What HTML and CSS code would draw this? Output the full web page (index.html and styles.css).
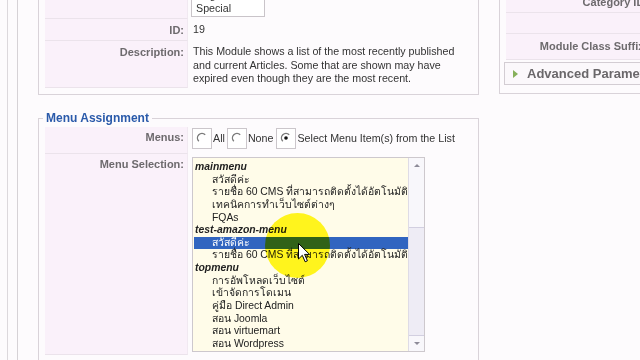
FILE: index.html
```html
<!DOCTYPE html>
<html lang="th">
<head>
    <meta charset="UTF-8">
    <title>Module: Latest News</title>
    <link rel="stylesheet" href="styles.css">
</head>
<body>

<div class="frame">
    <div class="frame-inner">
        <div class="columns">

            <div class="col-left">
                <fieldset class="box details">
                    <div class="row row-access">
                        <div class="key"></div>
                        <div class="val">
                            <div class="access">
                                <div>Public</div>
                                <div>Registered</div>
                                <div>Special</div>
                            </div>
                        </div>
                    </div>
                    <div class="row row-id">
                        <div class="key">ID:</div>
                        <div class="val">19</div>
                    </div>
                    <div class="row row-desc">
                        <div class="key">Description:</div>
                        <div class="val">This Module shows a list of the most recently published and current Articles. Some that are shown may have expired even though they are the most recent.</div>
                    </div>
                </fieldset>

                <fieldset class="box menus">
                    <legend>Menu Assignment</legend>
                    <div class="row row-menus">
                        <div class="key">Menus:</div>
                        <div class="val radios">
                            <label class="radio">
                                <span class="rbox"><svg width="18" height="19" viewBox="0 0 18 19"><path d="M12.2 5.8 A4.5 4.5 0 0 0 5.8 12.2" fill="none" stroke="#7a7a7a" stroke-width="1.4"/></svg></span>All
                            </label>
                            <label class="radio">
                                <span class="rbox"><svg width="18" height="19" viewBox="0 0 18 19"><path d="M12.2 5.8 A4.5 4.5 0 0 0 5.8 12.2" fill="none" stroke="#7a7a7a" stroke-width="1.4"/></svg></span>None
                            </label>
                            <label class="radio">
                                <span class="rbox"><svg width="18" height="19" viewBox="0 0 18 19"><path d="M12.2 5.8 A4.5 4.5 0 0 0 5.8 12.2" fill="none" stroke="#7a7a7a" stroke-width="1.4"/><circle cx="9" cy="9" r="1.8" fill="#111"/></svg></span>Select Menu Item(s) from the List
                            </label>
                        </div>
                    </div>
                    <div class="row row-select">
                        <div class="key">Menu Selection:</div>
                        <div class="val">
                            <div class="menulist">
                                <div class="options">
                                    <div class="group">mainmenu</div>
                                    <div class="opt">สวัสดีค่ะ</div>
                                    <div class="opt">รายชื่อ 60 CMS ที่สามารถติดตั้งได้อัตโนมัติ</div>
                                    <div class="opt">เทคนิคการทำเว็บไซต์ต่างๆ</div>
                                    <div class="opt">FQAs</div>
                                    <div class="group">test-amazon-menu</div>
                                    <div class="opt selected">สวัสดีค่ะ</div>
                                    <div class="opt">รายชื่อ 60 CMS ที่สามารถติดตั้งได้อัตโนมัติ</div>
                                    <div class="group">topmenu</div>
                                    <div class="opt">การอัพโหลดเว็บไซต์</div>
                                    <div class="opt">เข้าจัดการโดเมน</div>
                                    <div class="opt">คู่มือ Direct Admin</div>
                                    <div class="opt">สอน Joomla</div>
                                    <div class="opt">สอน virtuemart</div>
                                    <div class="opt">สอน Wordpress</div>
                                </div>
                                <div class="scroll">
                                    <div class="sb-btn"><span class="arrow-up"></span></div>
                                    <div class="sb-track"><div class="sb-thumb"></div></div>
                                    <div class="sb-btn"><span class="arrow-down"></span></div>
                                </div>
                            </div>
                        </div>
                    </div>
                </fieldset>
            </div>

            <div class="col-right">
                <fieldset class="box params">
                    <div class="prow p-cat"><div class="pkey">Category ID:</div></div>
                    <div class="prow p-spacer"><div class="pkey"></div></div>
                    <div class="prow p-sfx"><div class="pkey">Module Class Suffix:</div></div>
                    <div class="panel"><span class="tri"></span>Advanced Parameters</div>
                </fieldset>
            </div>

        </div>
    </div>
</div>

<!-- cursor highlight from the screen recording -->
<div class="spot"></div>
<svg class="pointer" width="13" height="20" viewBox="0 0 13 20"><path d="M0.5 0.5 L0.5 16 L4.3 12.3 L7.2 18.8 L9.4 17.8 L6.6 11.4 L11.6 11.4 Z" fill="#fff" stroke="#000" stroke-width="1"/></svg>

</body>
</html>
```

FILE: styles.css
```css
body {
    margin: 0;
    height: 360px;
    overflow: hidden;
    background-color: #fdfbfd;
    font-family: "Liberation Sans", Arial, "Noto Sans", sans-serif;
    font-size: 10.7px;
    color: #333;
    position: relative;
}
.frame {
    margin-left: 7px;
    padding-left: 9px;
    border-left: 1px solid #dcd8dc;
    height: 360px;
}
.frame-inner {
    display: flow-root;
    padding-left: 20px;
    border-left: 1px solid #d6d2d6;
    height: 360px;
}
.columns {
    display: flex;
    gap: 20px;
    margin-top: -20px;
}
.col-left {
    width: 441px;
    flex: none;
}
.col-right {
    width: 200px;
    flex: none;
}
fieldset.box {
    margin: 0;
    padding: 0 6px 6px;
    border: 1px solid #d9d3d9;
    min-width: 0;
}
legend {
    margin-left: -2px;
    padding: 0 3px;
    font-size: 12px;
    line-height: 14px;
    font-weight: bold;
    color: #2a5aaa;
}
.row {
    display: flex;
}
.key {
    width: 139px;
    flex: none;
    padding-right: 3px;
    border-bottom: 1px solid #ebe3eb;
    border-right: 1px solid #f1e9f1;
    background-color: #faf1fa;
    text-align: right;
    font-size: 11px;
    line-height: 14px;
    font-weight: bold;
    color: #6d6a6d;
}
.val {
    padding-left: 5px;
    line-height: 13.5px;
}
.row-access { height: 38px; }
.row-access .val {
    padding-left: 3px;
    display: flex;
    align-items: flex-end;
}
.access {
    width: 66px;
    height: 33px;
    margin-bottom: 2px;
    padding: 0 2px 1px 4px;
    border: 1px solid #c9c4c9;
    border-top: none;
    background-color: #fff;
    display: flex;
    flex-direction: column;
    justify-content: flex-end;
    overflow: hidden;
    line-height: 13px;
}
.row-id { height: 22px; }
.row-id .key, .row-id .val { padding-top: 4px; }
.row-desc { height: 47px; }
.row-desc .key, .row-desc .val { padding-top: 4px; }

fieldset.menus {
    margin-top: 16px;
    padding-top: 2px;
    padding-bottom: 20px;
}
.row-menus { height: 27px; }
.row-menus .key { padding-top: 3px; }
.radios {
    padding-left: 4px;
    display: flex;
    align-items: flex-start;
}
.radio {
    display: flex;
    align-items: center;
    margin-right: 2px;
    padding-top: 1px;
}
.rbox {
    width: 18px;
    height: 19px;
    margin-right: 1px;
    border: 1px solid #cbc6cb;
    background-color: #fff;
    display: block;
}
.rbox svg {
    display: block;
}
.radio:nth-child(2) { margin-right: 3px; }
.row-select { height: 201px; }
.row-select .key { padding-top: 3px; }
.row-select .val { padding-left: 4px; }
.menulist {
    margin-top: 3px;
    width: 231px;
    height: 193px;
    border: 1px solid #cdc8cd;
    background-color: #fffce9;
    display: flex;
}
.options {
    flex: 1;
    padding-top: 3px;
    line-height: 12.64px;
    font-size: 10.4px;
    color: #222;
    white-space: nowrap;
    overflow: hidden;
}
.group {
    padding-left: 2px;
    font-weight: bold;
    font-style: italic;
}
.opt {
    padding-left: 19px;
}
.opt.selected {
    background-color: #3165c0;
    color: #fff;
    margin-left: 1px;
    padding-left: 18px;
}
.scroll {
    width: 15px;
    border-left: 1px solid #dedbe6;
    display: flex;
    flex-direction: column;
    background-color: #f8f7fb;
}
.sb-btn {
    height: 15px;
    display: flex;
    align-items: center;
    justify-content: center;
}
.arrow-up, .arrow-down {
    width: 0;
    height: 0;
    border-left: 3px solid transparent;
    border-right: 3px solid transparent;
}
.arrow-up { border-bottom: 3px solid #8d8b98; }
.arrow-down { border-top: 3px solid #8d8b98; }
.sb-track {
    flex: 1;
    padding-top: 54px;
    display: flex;
    flex-direction: column;
}
.sb-thumb {
    flex: 1;
    border-top: 1px solid #d2cfe0;
    border-bottom: 1px solid #d2cfe0;
    background-color: #eeecf5;
}

fieldset.params {
    padding-bottom: 8px;
}
.prow {
    display: flex;
}
.pkey {
    width: 142px;
    flex: none;
    padding-right: 3px;
    border-bottom: 1px solid #ebe3eb;
    background-color: #faf1fa;
    text-align: right;
    font-size: 11px;
    line-height: 14px;
    font-weight: bold;
    color: #6d6a6d;
    white-space: nowrap;
}
.p-cat { height: 32px; }
.p-cat .pkey { padding-top: 14px; }
.p-spacer { height: 21px; }
.p-sfx { height: 26px; }
.p-sfx .pkey { padding-top: 5px; }
.panel {
    margin: 2px -40px 0 -2px;
    height: 21px;
    border: 1px solid #d3cdd3;
    background-color: #fbf8fb;
    display: flex;
    align-items: center;
    font-size: 13px;
    font-weight: bold;
    color: #6a676a;
    white-space: nowrap;
}
.tri {
    width: 0;
    height: 0;
    margin: 0 9px 0 8px;
    border-top: 4px solid transparent;
    border-bottom: 4px solid transparent;
    border-left: 5px solid #86b05a;
}

.spot {
    position: absolute;
    left: 265px;
    top: 213px;
    width: 65px;
    height: 65px;
    border-radius: 50%;
    background-color: #fff600;
    opacity: 0.88;
    mix-blend-mode: multiply;
}
.pointer {
    position: absolute;
    left: 298px;
    top: 243px;
}
```
